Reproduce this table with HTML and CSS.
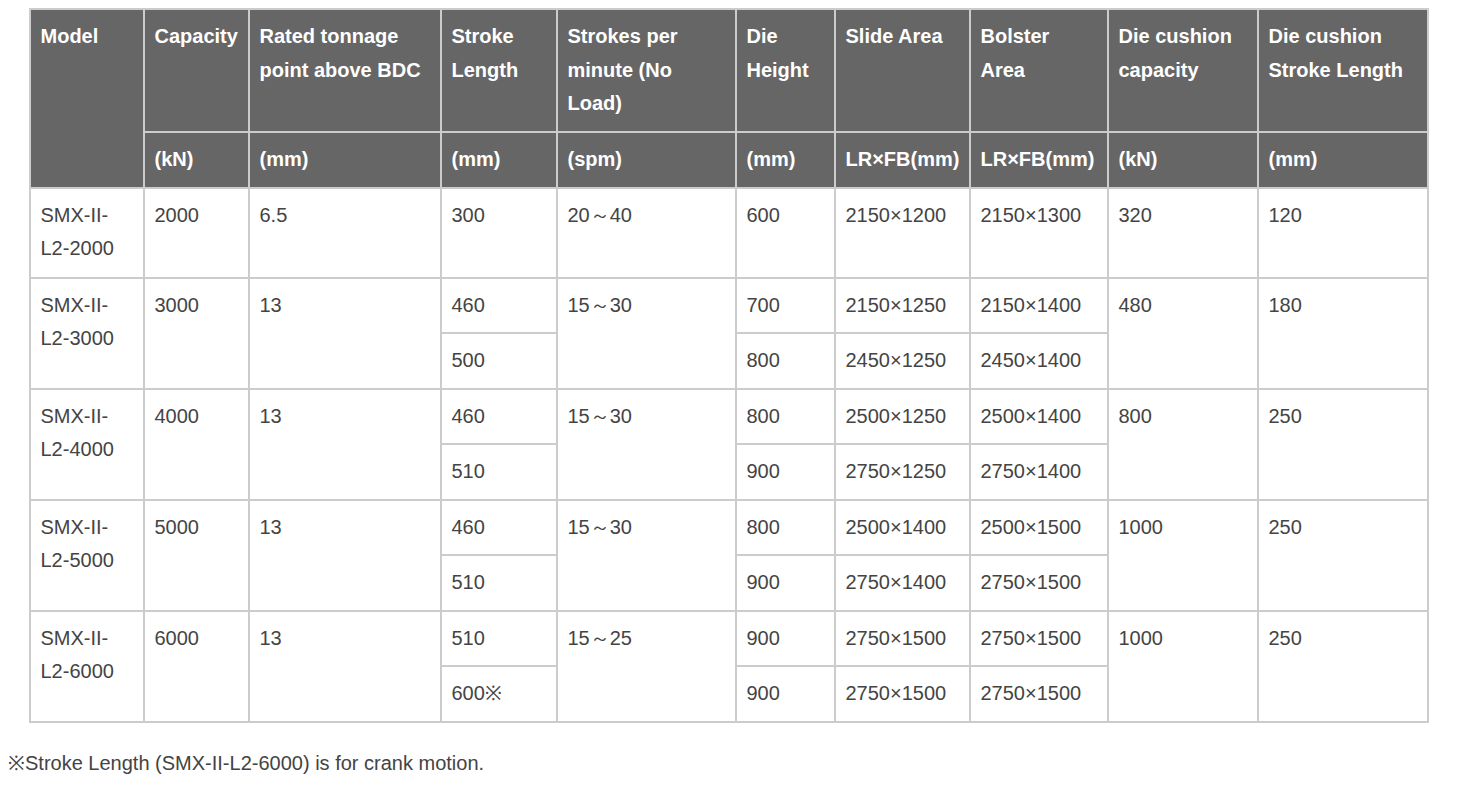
FILE: index.html
```html
<!DOCTYPE html>
<html lang="en">
<head>
<meta charset="utf-8">
<title>SMX-II-L2 Specifications</title>
<link rel="stylesheet" href="styles.css">
</head>
<body>
<table class="spec">
  <colgroup>
    <col class="c1"><col class="c2"><col class="c3"><col class="c4"><col class="c5">
    <col class="c6"><col class="c7"><col class="c8"><col class="c9"><col class="c10">
  </colgroup>
  <thead>
    <tr>
      <th rowspan="2">Model</th>
      <th class="h1">Capacity</th>
      <th class="h1">Rated tonnage point above BDC</th>
      <th class="h1">Stroke Length</th>
      <th class="h1">Strokes per minute (No Load)</th>
      <th class="h1">Die Height</th>
      <th class="h1">Slide Area</th>
      <th class="h1">Bolster Area</th>
      <th class="h1">Die cushion capacity</th>
      <th class="h1">Die cushion Stroke Length</th>
    </tr>
    <tr>
      <th>(kN)</th><th>(mm)</th><th>(mm)</th><th>(spm)</th><th>(mm)</th>
      <th>LR×FB(mm)</th><th>LR×FB(mm)</th><th>(kN)</th><th>(mm)</th>
    </tr>
  </thead>
  <tbody>
    <tr class="solo">
      <td>SMX-II-L2-2000</td><td>2000</td><td>6.5</td><td>300</td><td>20～40</td>
      <td>600</td><td>2150×1200</td><td>2150×1300</td><td>320</td><td>120</td>
    </tr>
    <tr>
      <td rowspan="2">SMX-II-L2-3000</td><td rowspan="2">3000</td><td rowspan="2">13</td>
      <td>460</td><td rowspan="2">15～30</td><td>700</td><td>2150×1250</td><td>2150×1400</td>
      <td rowspan="2">480</td><td rowspan="2">180</td>
    </tr>
    <tr><td>500</td><td>800</td><td>2450×1250</td><td>2450×1400</td></tr>
    <tr>
      <td rowspan="2">SMX-II-L2-4000</td><td rowspan="2">4000</td><td rowspan="2">13</td>
      <td>460</td><td rowspan="2">15～30</td><td>800</td><td>2500×1250</td><td>2500×1400</td>
      <td rowspan="2">800</td><td rowspan="2">250</td>
    </tr>
    <tr><td>510</td><td>900</td><td>2750×1250</td><td>2750×1400</td></tr>
    <tr>
      <td rowspan="2">SMX-II-L2-5000</td><td rowspan="2">5000</td><td rowspan="2">13</td>
      <td>460</td><td rowspan="2">15～30</td><td>800</td><td>2500×1400</td><td>2500×1500</td>
      <td rowspan="2">1000</td><td rowspan="2">250</td>
    </tr>
    <tr><td>510</td><td>900</td><td>2750×1400</td><td>2750×1500</td></tr>
    <tr>
      <td rowspan="2">SMX-II-L2-6000</td><td rowspan="2">6000</td><td rowspan="2">13</td>
      <td>510</td><td rowspan="2">15～25</td><td>900</td><td>2750×1500</td><td>2750×1500</td>
      <td rowspan="2">1000</td><td rowspan="2">250</td>
    </tr>
    <tr><td>600※</td><td>900</td><td>2750×1500</td><td>2750×1500</td></tr>
  </tbody>
</table>
<p class="note">※Stroke Length (SMX-II-L2-6000) is for crank motion.</p>
</body>
</html>
```

FILE: styles.css
```css
body {
  margin: 8px;
  font-family: "Liberation Sans", Arial, sans-serif;
  font-size: 20px;
  line-height: 33.5px;
  color: #444;
  background: #fff;
}
.spec {
  width: 1400px;
  margin: 0 auto;
  border-collapse: collapse;
  table-layout: fixed;
}
.c1 { width: 114px; }
.c2 { width: 105px; }
.c3 { width: 192px; }
.c4 { width: 116px; }
.c5 { width: 179px; }
.c6 { width: 99px; }
.c7 { width: 135px; }
.c8 { width: 138px; }
.c9 { width: 150px; }
.c10 { width: 170px; }
.spec th,
.spec td {
  border: 2px solid #ccc;
  padding: 10px 10px;
  text-align: left;
  vertical-align: top;
}
.spec th {
  background: #666;
  color: #fff;
  font-weight: bold;
}
.spec th.h1 {
  height: 101px;
}
.spec .solo td {
  height: 68px;
}
.note {
  margin: 24px 0 0;
}
```
